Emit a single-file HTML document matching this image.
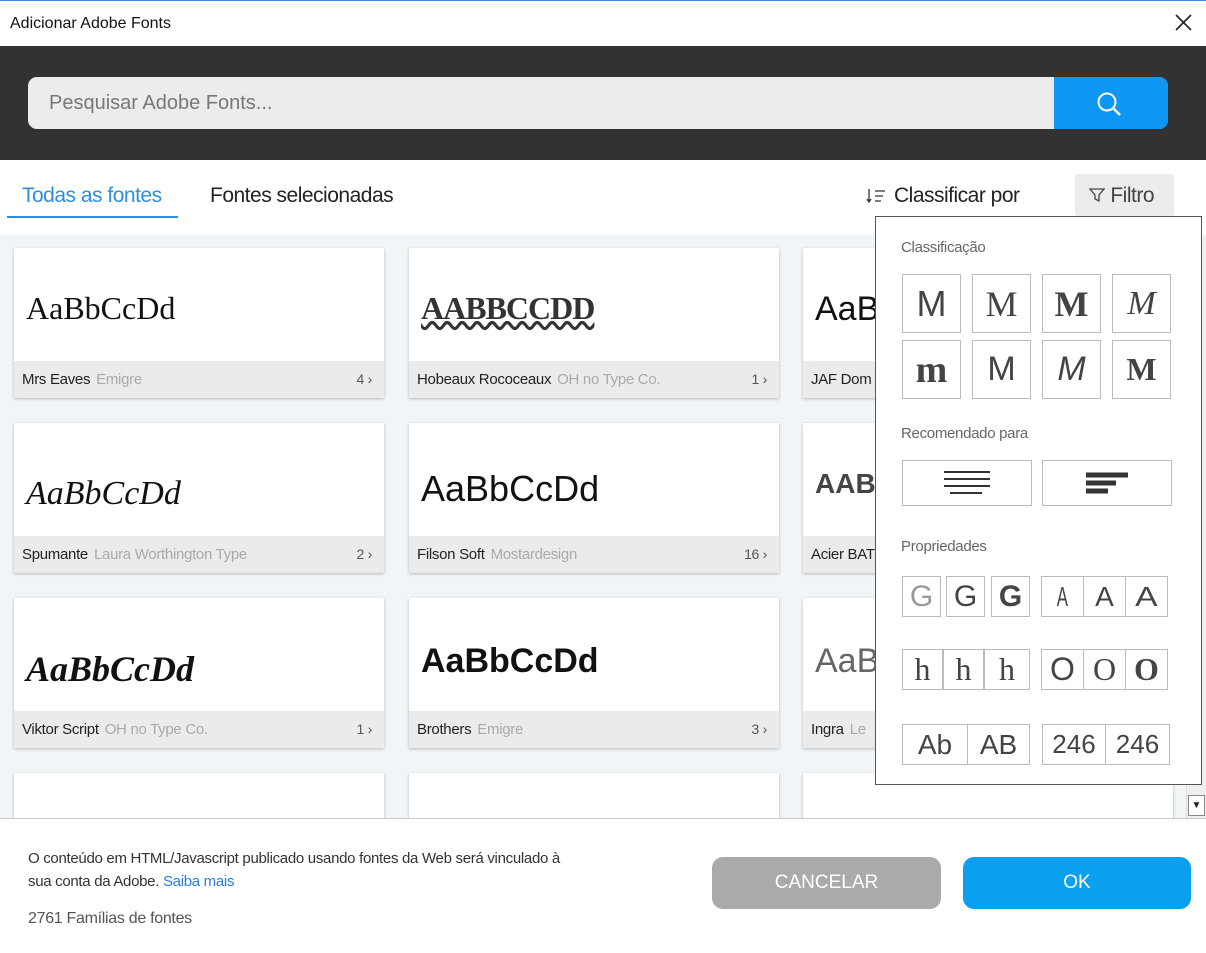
<!DOCTYPE html>
<html><head><meta charset="utf-8"><style>
*{box-sizing:border-box;margin:0;padding:0}
body{width:1206px;height:953px;overflow:hidden;background:#fff;font-family:"Liberation Sans",sans-serif;position:relative;color:#222}
.a{position:absolute}
.card{position:absolute;width:370px;height:150px;background:#fff;box-shadow:0 1px 3px rgba(0,0,0,.25)}
.card .bar{position:absolute;left:0;right:0;bottom:0;height:37px;background:#ebebeb;font-size:15px;line-height:37px;padding-left:8px;letter-spacing:-.3px}
.card .bar b{font-weight:normal;color:#222}
.card .bar i{font-style:normal;color:#aaa;margin-left:6px}
.card .bar .n{position:absolute;right:12px;top:0;color:#555;font-size:14px}
.card .s{position:absolute;left:12px;top:42px;font-size:34px;color:#111}
.bx{position:absolute;border:1px solid #bbb;background:#fff;display:flex;align-items:center;justify-content:center;color:#444}
.lbl{position:absolute;font-size:15px;color:#666;letter-spacing:-.3px}
</style></head><body>
<div class="a" style="left:0;top:0;width:1206px;height:1px;background:#3c8ee0"></div>
<div class="a" style="left:10px;top:15px;font-size:16px;color:#111">Adicionar Adobe Fonts</div>
<svg class="a" style="left:1175px;top:14px" width="17" height="17"><path d="M1 1L16 16M16 1L1 16" stroke="#222" stroke-width="1.6"/></svg>
<div class="a" style="left:0;top:46px;width:1206px;height:114px;background:#323232"></div>
<div class="a" style="left:28px;top:77px;width:1140px;height:52px;background:#ececec;border-radius:9px;overflow:hidden">
<div class="a" style="left:21px;top:15px;font-size:20px;color:#777">Pesquisar Adobe Fonts...</div>
<div class="a" style="left:1026px;top:0;width:114px;height:52px;background:#0d96f2"></div>
<svg class="a" style="left:1068px;top:14px" width="26" height="26"><circle cx="11" cy="11" r="8.5" fill="none" stroke="#fff" stroke-width="2"/><path d="M17 17L24 24" stroke="#fff" stroke-width="2.4"/></svg>
</div>
<div class="a" style="left:22px;top:184px;font-size:21px;color:#2b8fe0;letter-spacing:-.5px">Todas as fontes</div>
<div class="a" style="left:7px;top:216px;width:171px;height:2px;background:#2b8fe0"></div>
<div class="a" style="left:210px;top:184px;font-size:21px;color:#222;letter-spacing:-.5px">Fontes selecionadas</div>
<svg class="a" style="left:866px;top:187px" width="22" height="18"><path d="M3 2V15M1 12L3 15L5 12M9 4H19M9 9H17M9 14H15" stroke="#333" stroke-width="1.3" fill="none"/></svg>
<div class="a" style="left:894px;top:184px;font-size:21px;color:#222;letter-spacing:-.5px">Classificar por</div>
<div class="a" style="left:1075px;top:174px;width:99px;height:42px;background:#ececec;border-radius:3px"></div>
<div class="a" style="left:1089px;top:184px;font-size:21px;color:#444;letter-spacing:-.5px"><svg width="16" height="16" style="vertical-align:-1px"><path d="M1 2H15L10 8V14L6 12V8Z" fill="none" stroke="#444" stroke-width="1.3"/></svg> Filtro</div>
<div class="a" style="left:0;top:235px;width:1186px;height:583px;background:#f2f5f7;overflow:hidden">
<div class="card" style="left:14px;top:13px"><div class="s" style="font-family:'Liberation Serif',serif;font-size:32px;top:42px">AaBbCcDd</div><div class="bar"><b>Mrs Eaves</b><i>Emigre</i><span class="n">4 ›</span></div></div>
<div class="card" style="left:409px;top:13px"><div class="s" style="font-family:'Liberation Serif',serif;font-weight:bold;font-size:32px;letter-spacing:-1px;color:#333;text-decoration:underline;text-decoration-style:wavy">AABBCCDD</div><div class="bar"><b>Hobeaux Rococeaux</b><i>OH no Type Co.</i><span class="n">1 ›</span></div></div>
<div class="card" style="left:803px;top:13px"><div class="s">AaB</div><div class="bar"><b>JAF Dom</b></div></div>
<div class="card" style="left:14px;top:188px"><div class="s" style="font-family:'Liberation Serif',serif;font-style:italic;font-size:34px;top:52px">AaBbCcDd</div><div class="bar"><b>Spumante</b><i>Laura Worthington Type</i><span class="n">2 ›</span></div></div>
<div class="card" style="left:409px;top:188px"><div class="s" style="font-size:36px;top:45px">AaBbCcDd</div><div class="bar"><b>Filson Soft</b><i>Mostardesign</i><span class="n">16 ›</span></div></div>
<div class="card" style="left:803px;top:188px"><div class="s" style="font-weight:bold;font-size:28px;top:45px;color:#444">AAB</div><div class="bar"><b>Acier BAT</b></div></div>
<div class="card" style="left:14px;top:363px"><div class="s" style="font-family:'Liberation Serif',serif;font-style:italic;font-weight:bold;font-size:36px;top:50px">AaBbCcDd</div><div class="bar"><b>Viktor Script</b><i>OH no Type Co.</i><span class="n">1 ›</span></div></div>
<div class="card" style="left:409px;top:363px"><div class="s" style="font-weight:bold;font-size:34px;top:44px">AaBbCcDd</div><div class="bar"><b>Brothers</b><i>Emigre</i><span class="n">3 ›</span></div></div>
<div class="card" style="left:803px;top:363px"><div class="s" style="color:#666;font-size:34px;top:44px">AaB</div><div class="bar"><b>Ingra</b><i>Le</i></div></div>
<div class="card" style="left:14px;top:538px"></div>
<div class="card" style="left:409px;top:538px"></div>
<div class="card" style="left:803px;top:538px"></div>
</div>
<div class="a" style="left:1186px;top:235px;width:20px;height:583px;background:#f0f0f0;border-left:1px solid #ddd"></div>
<div class="a" style="left:1188px;top:795px;width:17px;height:21px;border:1px solid #888;background:#fff;font-size:10px;text-align:center;line-height:20px">▼</div>

<div class="a" style="left:875px;top:216px;width:327px;height:569px;background:#fff;border:1.5px solid #555"></div>
<div class="lbl" style="left:901px;top:239px">Classificação</div>
<div class="bx" style="left:902px;top:274px;width:59px;height:59px;font-size:36px">M</div>
<div class="bx" style="left:972px;top:274px;width:59px;height:59px;font-size:36px;font-family:'Liberation Serif',serif">M</div>
<div class="bx" style="left:1042px;top:274px;width:59px;height:59px;font-size:36px;font-family:'Liberation Serif',serif;font-weight:bold">M</div>
<div class="bx" style="left:1112px;top:274px;width:59px;height:59px;font-size:34px;font-family:'Liberation Serif',serif;font-style:italic">M</div>
<div class="bx" style="left:902px;top:340px;width:59px;height:59px;font-size:38px;font-family:'Liberation Serif',serif;font-weight:bold">m</div>
<div class="bx" style="left:972px;top:340px;width:59px;height:59px;font-size:34px">M</div>
<div class="bx" style="left:1042px;top:340px;width:59px;height:59px;font-size:34px;font-style:italic">M</div>
<div class="bx" style="left:1112px;top:340px;width:59px;height:59px;font-size:32px;font-family:'Liberation Serif',serif;font-weight:bold">M</div>
<div class="lbl" style="left:901px;top:425px">Recomendado para</div>
<div class="bx" style="left:902px;top:460px;width:130px;height:46px"><svg width="50" height="30"><path d="M2 4H48M2 11H48M2 18H48M8 25H40" stroke="#333" stroke-width="2"/></svg></div>
<div class="bx" style="left:1042px;top:460px;width:130px;height:46px"><svg width="50" height="30"><path d="M4 7H46M4 15H34M4 23H26" stroke="#333" stroke-width="5"/></svg></div>
<div class="lbl" style="left:901px;top:538px">Propriedades</div>
<div class="bx" style="left:902px;top:576px;width:39px;height:41px;font-size:30px;color:#999">G</div>
<div class="bx" style="left:946px;top:576px;width:39px;height:41px;font-size:30px">G</div>
<div class="bx" style="left:991px;top:576px;width:39px;height:41px;font-size:30px;font-weight:bold">G</div>
<div class="bx" style="left:1041px;top:576px;width:43px;height:41px;font-size:28px"><span style="display:inline-block;transform:scaleX(.6)">A</span></div>
<div class="bx" style="left:1083px;top:576px;width:43px;height:41px;font-size:28px">A</div>
<div class="bx" style="left:1125px;top:576px;width:43px;height:41px;font-size:28px"><span style="display:inline-block;transform:scaleX(1.2)">A</span></div>
<div class="bx" style="left:902px;top:649px;width:41px;height:41px;font-size:32px;font-family:'Liberation Serif',serif">h</div>
<div class="bx" style="left:943px;top:649px;width:41px;height:41px;font-size:32px;font-family:'Liberation Serif',serif">h</div>
<div class="bx" style="left:984px;top:649px;width:46px;height:41px;font-size:32px;font-family:'Liberation Serif',serif">h</div>
<div class="bx" style="left:1041px;top:649px;width:43px;height:41px;font-size:32px">O</div>
<div class="bx" style="left:1083px;top:649px;width:43px;height:41px;font-size:32px;font-family:'Liberation Serif',serif">O</div>
<div class="bx" style="left:1125px;top:649px;width:43px;height:41px;font-size:32px;font-family:'Liberation Serif',serif;font-weight:bold">O</div>
<div class="bx" style="left:902px;top:724px;width:66px;height:41px;font-size:28px">Ab</div>
<div class="bx" style="left:967px;top:724px;width:63px;height:41px;font-size:28px">AB</div>
<div class="bx" style="left:1042px;top:724px;width:64px;height:41px;font-size:26px">246</div>
<div class="bx" style="left:1105px;top:724px;width:65px;height:41px;font-size:26px">246</div>

<div class="a" style="left:0;top:818px;width:1206px;height:135px;background:#fff;border-top:1px solid #ccc"></div>
<div class="a" style="left:28px;top:847px;font-size:15px;line-height:23px;color:#333;letter-spacing:-.3px">O conteúdo em HTML/Javascript publicado usando fontes da Web será vinculado à<br>sua conta da Adobe. <span style="color:#2b7fd8">Saiba mais</span></div>
<div class="a" style="left:28px;top:910px;font-size:16px;color:#555;letter-spacing:-.3px">2761 Famílias de fontes</div>
<div class="a" style="left:712px;top:857px;width:229px;height:52px;background:#aaa;border-radius:11px;color:#fff;font-size:19px;text-align:center;line-height:52px">CANCELAR</div>
<div class="a" style="left:963px;top:857px;width:228px;height:52px;background:#0b9ff0;border-radius:11px;color:#fff;font-size:19px;text-align:center;line-height:52px">OK</div>
</body></html>
